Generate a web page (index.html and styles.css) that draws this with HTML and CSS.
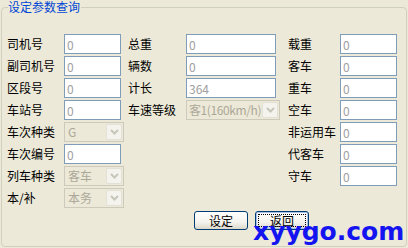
FILE: index.html
```html
<!DOCTYPE html>
<html lang="zh-CN">
<head>
  <meta charset="UTF-8">
  <title>设定参数查询</title>
  <link rel="stylesheet" href="styles.css">
</head>
<body>
  <fieldset class="panel">
    <legend>设定参数查询</legend>
    <div class="grid">
      <label>司机号</label><input class="in" value="0" readonly>
      <label>总重</label><input class="in wide" value="0" readonly>
      <label>载重</label><input class="in" value="0" readonly>

      <label>副司机号</label><input class="in" value="0" readonly>
      <label>辆数</label><input class="in wide" value="0" readonly>
      <label>客车</label><input class="in" value="0" readonly>

      <label>区段号</label><input class="in" value="0" readonly>
      <label>计长</label><input class="in wide" value="364" readonly>
      <label>重车</label><input class="in" value="0" readonly>

      <label>车站号</label><input class="in" value="0" readonly>
      <label>车速等级</label>
      <div class="sel wide-sel"><span class="sel-text tight">客1(160km/h)</span><span class="sel-btn"><svg width="9" height="6" viewBox="0 0 9 6"><polyline points="1,1 4.5,4.5 8,1" fill="none" stroke="#c8c6b9" stroke-width="2"/></svg></span></div>
      <label>空车</label><input class="in" value="0" readonly>

      <label>车次种类</label>
      <div class="sel"><span class="sel-text">G</span><span class="sel-btn"><svg width="9" height="6" viewBox="0 0 9 6"><polyline points="1,1 4.5,4.5 8,1" fill="none" stroke="#c8c6b9" stroke-width="2"/></svg></span></div>
      <span></span><span></span>
      <label>非运用车</label><input class="in" value="0" readonly>

      <label>车次编号</label><input class="in" value="0" readonly>
      <span></span><span></span>
      <label>代客车</label><input class="in" value="0" readonly>

      <label>列车种类</label>
      <div class="sel"><span class="sel-text">客车</span><span class="sel-btn"><svg width="9" height="6" viewBox="0 0 9 6"><polyline points="1,1 4.5,4.5 8,1" fill="none" stroke="#c8c6b9" stroke-width="2"/></svg></span></div>
      <span></span><span></span>
      <label>守车</label><input class="in" value="0" readonly>

      <label>本/补</label>
      <div class="sel"><span class="sel-text">本务</span><span class="sel-btn"><svg width="9" height="6" viewBox="0 0 9 6"><polyline points="1,1 4.5,4.5 8,1" fill="none" stroke="#c8c6b9" stroke-width="2"/></svg></span></div>
    </div>
    <div class="buttons">
      <button class="btn">设定</button>
      <button class="btn focus">返回</button>
    </div>
  </fieldset>
  <div class="watermark">xyygo.com</div>
</body>
</html>
```

FILE: styles.css
```css
* { box-sizing: border-box; font-family: "Noto Sans CJK SC", "DejaVu Sans", sans-serif; }
body { margin: 0; width: 408px; height: 248px; background: #ece9d8; color: #000; font-size: 12px; position: relative; overflow: hidden; }

.panel { margin: 0 1px; height: 247px; padding: 20px 5px 0 5px; border: 1px solid #d0d0bf; border-radius: 4px; }
.panel legend { padding: 0 1px 0 0; margin-left: 1px; color: #0046d5; font-size: 12px; line-height: 14px; }

.grid { display: grid; grid-template-columns: 57px 64px 58px 102px 52px 56px; grid-auto-rows: 20px; row-gap: 2px; align-items: center; }
.grid label { line-height: 20px; white-space: nowrap; }

.in { width: 57px; height: 20px; margin: 0; padding: 0 2px; border: 1px solid #7f9db9; background: #fff; color: #a0a0a0; font-size: 12px; outline: none; }
.in.wide { width: 90px; }

.sel { display: flex; width: 60px; height: 20px; border: 1px solid #cdcabb; background: #ece9d8; }
.sel.wide-sel { width: 94px; }
.sel-text { flex: 1; padding-left: 3px; line-height: 18px; color: #aca899; white-space: nowrap; overflow: hidden; }
.sel-text.tight { padding-left: 2px; letter-spacing: -0.4px; }
.sel-btn { width: 16px; height: 16px; margin: 1px; display: flex; align-items: center; justify-content: center; background: #f4f3ee; border: 1px solid #e3e1d6; border-radius: 2px; }

.buttons { display: flex; gap: 7px; margin: 3px 0 0 187px; }
.btn { width: 54px; height: 19px; padding: 0; border: 1px solid #003c74; border-radius: 3px; background: linear-gradient(#ffffff, #f4f3ee 60%, #dcd9cb); font-size: 12px; line-height: 15px; color: #000; }
.btn.focus { outline: 1px dotted #000; outline-offset: -4px; box-shadow: inset 0 0 0 1px #a8c0e8; }

.watermark { position: absolute; left: 253px; top: 219px; font-family: "DejaVu Sans", sans-serif; font-weight: bold; font-size: 25px; line-height: 25px; color: #1414f0; }
```
